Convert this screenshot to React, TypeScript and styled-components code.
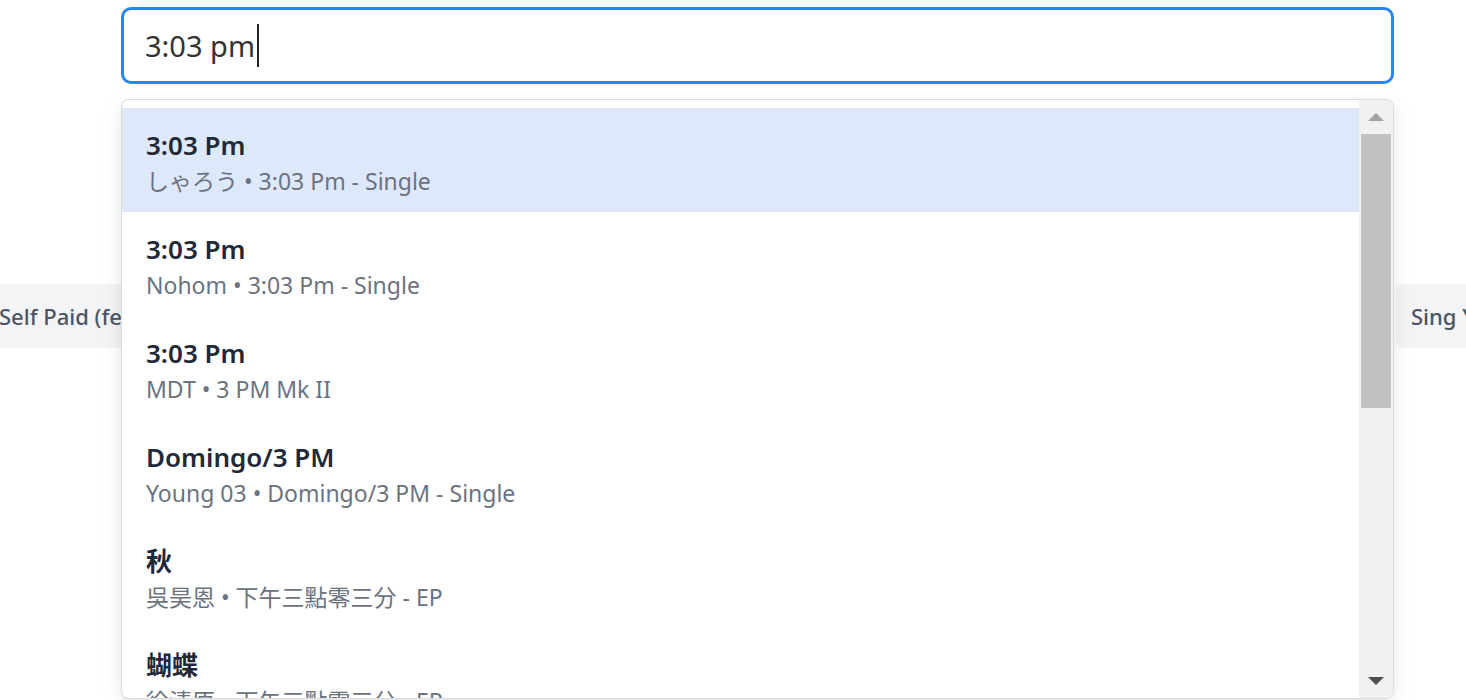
import React from "react";
import styled, { createGlobalStyle } from "styled-components";

const GlobalStyle = createGlobalStyle`
  html, body { margin: 0; padding: 0; background: #ffffff; }
  body { font-family: "Noto Sans", "Noto Sans CJK JP", sans-serif; overflow: hidden; }
`;

const Page = styled.div`
  width: 1466px;
  height: 700px;
  padding-top: 7px;
  box-sizing: border-box;
  overflow: hidden;
`;

const SearchWrap = styled.div`
  position: relative;
  margin: 0 72px 0 121px;
`;

const SearchInput = styled.div`
  height: 77px;
  box-sizing: border-box;
  border: 3px solid #2684ff;
  border-radius: 10px;
  display: flex;
  align-items: center;
  padding: 0 21px;
  font-size: 29px;
  color: #333333;
  background: #fff;
`;

const Caret = styled.span`
  display: inline-block;
  width: 2px;
  height: 43px;
  background: #222;
  margin-left: 2px;
`;

const Dropdown = styled.div`
  position: absolute;
  left: 0;
  right: 0;
  top: calc(100% + 15px);
  height: 600px;
  box-sizing: border-box;
  border: 1px solid #dcdcdc;
  border-radius: 8px;
  background: #fff;
  box-shadow: 0 6px 24px rgba(0, 0, 0, 0.08), 0 2px 6px rgba(0, 0, 0, 0.04);
  display: flex;
  overflow: hidden;
  z-index: 5;
`;

const List = styled.div`
  flex: 1;
  padding-top: 8px;
  overflow: hidden;
`;

const Option = styled.div<{ $active?: boolean }>`
  height: 104px;
  box-sizing: border-box;
  padding: 20px 24px 0;
  background: ${(p) => (p.$active ? "#dde9fb" : "transparent")};
`;

const Title = styled.div`
  font-size: 26px;
  line-height: 34px;
  font-weight: 600;
  color: #1f2937;
`;

const Subtitle = styled.div`
  margin-top: 4px;
  font-size: 23px;
  line-height: 30px;
  color: #6b7280;
`;

const Scrollbar = styled.div`
  width: 34px;
  background: #f1f1f1;
  display: flex;
  flex-direction: column;
  align-items: center;
`;

const ArrowBox = styled.div`
  height: 34px;
  width: 100%;
  display: flex;
  align-items: center;
  justify-content: center;
`;

const Thumb = styled.div`
  width: 30px;
  height: 274px;
  background: #c1c1c1;
`;

const Spacer = styled.div`
  flex: 1;
`;

const ChipRow = styled.div`
  margin-top: 200px;
  display: flex;
  justify-content: space-between;
  overflow: hidden;
`;

const Chip = styled.div<{ $offset?: number }>`
  height: 64px;
  flex-shrink: 0;
  box-sizing: border-box;
  padding: 0 15px;
  margin-left: ${(p) => p.$offset ?? 0}px;
  display: flex;
  align-items: center;
  background: #f3f4f6;
  border-radius: 8px;
  font-size: 22px;
  font-weight: 500;
  color: #4b5563;
  white-space: nowrap;
`;

const ChipClip = styled.div`
  width: 70px;
  overflow: hidden;
  display: flex;
`;

const options = [
  { title: "3:03 Pm", sub: "しゃろう • 3:03 Pm - Single" },
  { title: "3:03 Pm", sub: "Nohom • 3:03 Pm - Single" },
  { title: "3:03 Pm", sub: "MDT • 3 PM Mk II" },
  { title: "Domingo/3 PM", sub: "Young 03 • Domingo/3 PM - Single" },
  { title: "秋", sub: "吳昊恩 • 下午三點零三分 - EP" },
  { title: "蝴蝶", sub: "徐清原 • 下午三點零三分 - EP" },
];

export default function App() {
  return (
    <>
      <GlobalStyle />
      <Page>
        <SearchWrap>
          <SearchInput>
            3:03 pm
            <Caret />
          </SearchInput>
          <Dropdown>
            <List>
              {options.map((o, i) => (
                <Option key={i} $active={i === 0}>
                  <Title>{o.title}</Title>
                  <Subtitle>{o.sub}</Subtitle>
                </Option>
              ))}
            </List>
            <Scrollbar>
              <ArrowBox>
                <svg width="16" height="8" viewBox="0 0 16 8">
                  <polygon points="8,0 16,8 0,8" fill="#a3a3a3" />
                </svg>
              </ArrowBox>
              <Thumb />
              <Spacer />
              <ArrowBox>
                <svg width="16" height="8" viewBox="0 0 16 8">
                  <polygon points="0,0 16,0 8,8" fill="#505050" />
                </svg>
              </ArrowBox>
            </Scrollbar>
          </Dropdown>
        </SearchWrap>
        <ChipRow>
          <Chip $offset={-16}>Self Paid (feat. Kenny)</Chip>
          <ChipClip>
            <Chip>Sing Your Song</Chip>
          </ChipClip>
        </ChipRow>
      </Page>
    </>
  );
}
